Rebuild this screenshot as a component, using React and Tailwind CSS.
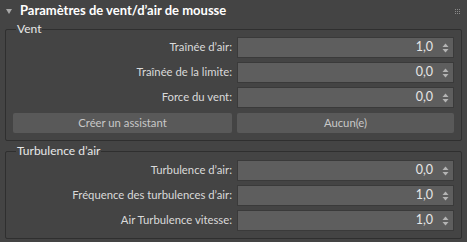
import React from 'react';

const Spinner = () => (
    <svg width="7" height="10" viewBox="0 0 7 10" className="shrink-0">
        <path d="M3.5 0.5 L6.5 4 L0.5 4 Z" fill="#b4b4b4" />
        <path d="M0.5 6 L6.5 6 L3.5 9.5 Z" fill="#b4b4b4" />
    </svg>
);

const SpinField = ({ label, value }) => (
    <>
        <div className="h-[21px] flex items-center justify-end text-[#dadada]">{label}</div>
        <div className="h-[21px] flex items-center justify-end gap-[9px] pr-[4px] bg-[#5e5e5e] border border-[#3a3a3a] text-[#e6e6e6] text-[12.5px]">
            <span>{value}</span>
            <Spinner />
        </div>
    </>
);

const Group = ({ title, children, className = '' }) => (
    <fieldset className={`mx-[5px] border border-[#2f2f2f] rounded-[2px] pl-[7px] pr-[7px] pb-[7px] ${className}`}>
        <legend className="ml-[3px] px-[1px] leading-[14px] text-[12px] text-[#e8e8e8]">{title}</legend>
        {children}
    </fieldset>
);

export default function App() {
    return (
        <div
            className="w-[467px] h-[242px] bg-[#444444] text-[11.3px] overflow-hidden"
            style={{ fontFamily: 'Lato, "Noto Sans", sans-serif' }}
        >
            {/* Header */}
            <div className="h-[22px] flex items-center pl-[6px] pr-[7px]">
                <svg width="6" height="5" viewBox="0 0 6 5" className="mr-[8px]">
                    <path d="M0 0 L6 0 L3 5 Z" fill="#a8a8a8" />
                </svg>
                <span className="font-bold text-[13px] text-white flex-1">Paramètres de vent/d’air de mousse</span>
                <div className="grid grid-cols-3 gap-[1px]">
                    {Array.from({ length: 9 }).map((_, i) => (
                        <span key={i} className="w-[1px] h-[1px] bg-[#8a8a8a]" />
                    ))}
                </div>
            </div>

            {/* Vent */}
            <Group title="Vent">
                <div className="grid grid-cols-[219px_217px] gap-x-[5px] gap-y-[4px] mt-[1px]">
                    <SpinField label="Traînée d’air:" value="1,0" />
                    <SpinField label="Traînée de la limite:" value="0,0" />
                    <SpinField label="Force du vent:" value="0,0" />
                    <button className="h-[20px] mt-[1px] bg-[#595959] rounded-[2px] text-[#c8c8c8]">Créer un assistant</button>
                    <button className="h-[20px] mt-[1px] bg-[#595959] rounded-[2px] text-[#c8c8c8]">Aucun(e)</button>
                </div>
            </Group>

            {/* Turbulence */}
            <Group title="Turbulence d’air" className="mt-[3px]">
                <div className="grid grid-cols-[219px_217px] gap-x-[5px] gap-y-[4px] mt-[2px]">
                    <SpinField label="Turbulence d’air:" value="0,0" />
                    <SpinField label="Fréquence des turbulences d’air:" value="1,0" />
                    <SpinField label="Air Turbulence vitesse:" value="1,0" />
                </div>
            </Group>
        </div>
    );
}
